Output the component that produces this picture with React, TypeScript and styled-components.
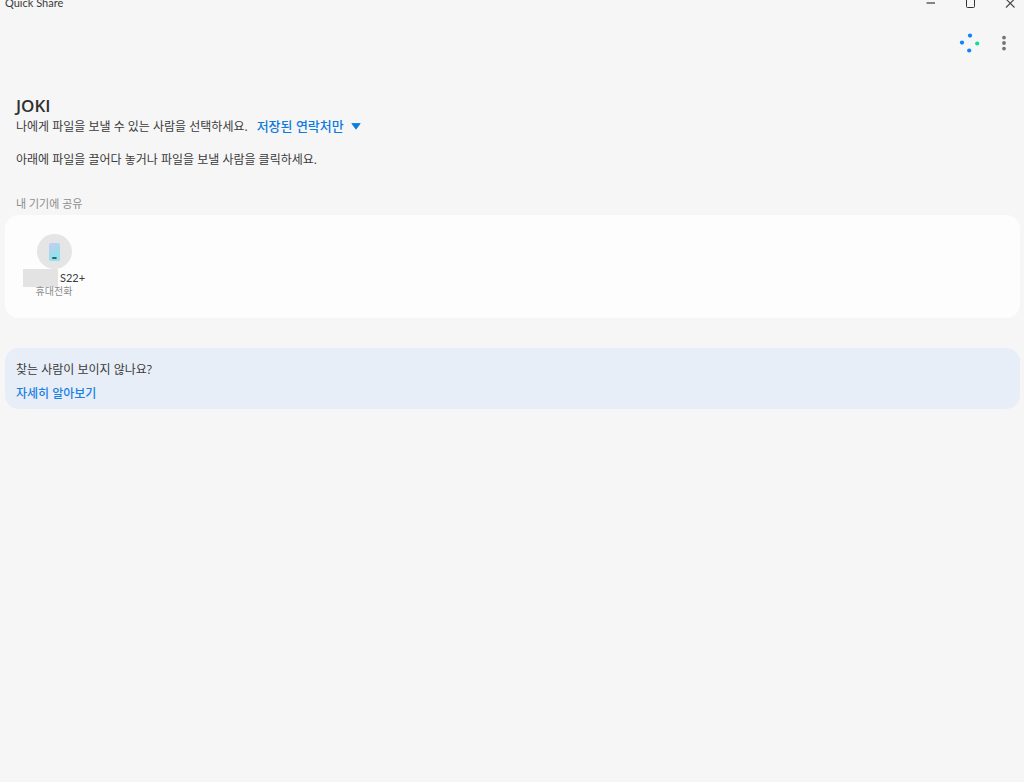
import React, { useState } from "react";
import styled, { createGlobalStyle } from "styled-components";

const GlobalStyle = createGlobalStyle`
  * { box-sizing: border-box; }
  body {
    margin: 0;
    background: #f6f6f6;
    color: #3a3a3a;
    font-family: "Open Sans", "Noto Sans CJK KR", sans-serif;
    font-size: 12px;
    line-height: 18px;
  }
  h1, h2, p, ul { margin: 0; padding: 0; }
  button, select { font: inherit; color: inherit; border: 0; background: none; padding: 0; }
`;

const Window = styled.div`
  min-height: 100vh;
`;

const TitleBar = styled.header`
  display: flex;
  justify-content: space-between;
  height: 6px;
  padding-left: 5px;
  font-family: Lato, "Noto Sans CJK KR", sans-serif;
  font-size: 11px;
  line-height: 6px;
`;

const WindowControls = styled.div`
  display: flex;
  gap: 12px;
`;

const IconButton = styled.button<{ $width: number }>`
  display: flex;
  align-items: center;
  justify-content: center;
  width: ${(p) => p.$width}px;
  svg { flex: none; }
`;

const Toolbar = styled.nav`
  display: flex;
  justify-content: flex-end;
  gap: 6px;
  height: 32px;
  margin-top: 21px;
  padding-right: 8px;
`;

const Intro = styled.section`
  padding: 36px 16px 0;
`;

const DeviceName = styled.h1`
  font-size: 17px;
  font-weight: 600;
  line-height: 22px;
  color: #303030;
`;

const Visibility = styled.div`
  display: flex;
  align-items: baseline;
  gap: 9px;
  height: 18px;
`;

const Picker = styled.span`
  display: flex;
  align-items: center;
  gap: 7px;
  color: #0f7bdc;
`;

const Select = styled.select`
  appearance: none;
  field-sizing: content;
  font-size: 13px;
  font-weight: 500;
  line-height: 18px;
  outline: none;
`;

const Hint = styled.p`
  margin-top: 16px;
`;

const SectionTitle = styled.h2`
  padding: 26px 16px 2px;
  font-size: 11px;
  font-weight: 400;
  color: #8c8c8c;
`;

const Card = styled.section<{ $tone: "plain" | "info" }>`
  margin: 0 4px 0 5px;
  border-radius: 14px;
  background: ${(p) => (p.$tone === "info" ? "#e7eef7" : "#fdfdfd")};
  padding: ${(p) => (p.$tone === "info" ? "13px 11px 6px" : "19px 16px 17px")};
  margin-top: ${(p) => (p.$tone === "info" ? 30 : 0)}px;
`;

const DeviceList = styled.ul`
  display: flex;
  min-height: 67px;
  list-style: none;
`;

const Device = styled.button`
  display: flex;
  flex-direction: column;
  align-items: center;
  width: 66px;
`;

const Avatar = styled.span`
  display: flex;
  align-items: center;
  justify-content: center;
  width: 35px;
  height: 35px;
  border-radius: 50%;
  background: #e5e5e5;
`;

const Model = styled.span`
  display: flex;
  align-items: center;
  gap: 2px;
  height: 18px;
  font-family: Lato, "Noto Sans CJK KR", sans-serif;
  font-size: 11px;
  white-space: nowrap;
`;

const HiddenName = styled.span`
  width: 35px;
  height: 18px;
  background: #e3e3e3;
`;

const Kind = styled.span`
  font-size: 10px;
  line-height: 8px;
  color: #8c8c8c;
`;

const HelpLink = styled.a`
  display: inline-block;
  margin-top: 6px;
  color: #1a80e4;
  font-weight: 500;
  text-decoration: none;
`;

export default function App() {
  const [audience, setAudience] = useState("contacts");
  return (
    <Window>
      <GlobalStyle />
      <TitleBar>
        <span>Quick Share</span>
        <WindowControls>
          <IconButton $width={28} aria-label="최소화">
            <svg width="10" height="10" viewBox="0 0 10 10">
              <path d="M1.5 5h8.5" stroke="#555" strokeWidth="1.4" />
            </svg>
          </IconButton>
          <IconButton $width={28} aria-label="최대화">
            <svg width="10" height="10" viewBox="0 0 10 10">
              <rect x="1.5" y="0.5" width="8" height="9" rx="1" fill="none" stroke="#333" />
            </svg>
          </IconButton>
          <IconButton $width={28} aria-label="닫기">
            <svg width="10" height="10" viewBox="0 0 10 10">
              <path d="M1 1l8.5 8.5M9.5 1l-8.5 8.5" stroke="#444" strokeWidth="1.1" />
            </svg>
          </IconButton>
        </WindowControls>
      </TitleBar>

      <Toolbar>
        <IconButton $width={32} aria-label="기기 검색">
          <svg width="22" height="22" viewBox="0 0 22 22">
            <circle cx="11" cy="3.6" r="2.1" fill="#0a84ff" />
            <circle cx="3" cy="10.6" r="2.1" fill="#0a84ff" />
            <circle cx="18.2" cy="11.5" r="2.1" fill="#12d89a" />
            <circle cx="10.2" cy="18.5" r="2.1" fill="#0a84ff" />
          </svg>
        </IconButton>
        <IconButton $width={24} aria-label="더보기">
          <svg width="6" height="18" viewBox="0 0 6 18">
            <circle cx="3" cy="3.6" r="1.9" fill="#747474" />
            <circle cx="3" cy="9" r="1.9" fill="#747474" />
            <circle cx="3" cy="14.6" r="1.9" fill="#747474" />
          </svg>
        </IconButton>
      </Toolbar>

      <main>
        <Intro>
          <DeviceName>JOKI</DeviceName>
          <Visibility>
            <label htmlFor="audience">나에게 파일을 보낼 수 있는 사람을 선택하세요.</label>
            <Picker>
              <Select id="audience" value={audience} onChange={(e) => setAudience(e.target.value)}>
                <option value="contacts">저장된 연락처만</option>
              </Select>
              <svg width="10" height="7" viewBox="0 0 10 7" aria-hidden="true">
                <path d="M.8.5h8.4L5 6.2z" fill="#0f7bdc" stroke="#0f7bdc" strokeWidth=".8" strokeLinejoin="round" />
              </svg>
            </Picker>
          </Visibility>
          <Hint>아래에 파일을 끌어다 놓거나 파일을 보낼 사람을 클릭하세요.</Hint>
        </Intro>

        <SectionTitle>내 기기에 공유</SectionTitle>
        <Card $tone="plain">
          <DeviceList>
            <li>
              <Device>
                <Avatar>
                  <svg width="11" height="18" viewBox="0 0 11 18" aria-hidden="true">
                    <defs>
                      <linearGradient id="phone" x1="0" y1="0" x2="0.4" y2="1">
                        <stop offset="0" stopColor="#c6cdf0" />
                        <stop offset="1" stopColor="#8ee3ec" />
                      </linearGradient>
                    </defs>
                    <rect width="11" height="18" rx="1.6" fill="url(#phone)" />
                    <rect x="3.2" y="14" width="4.4" height="2" rx=".6" fill="#35626c" />
                  </svg>
                </Avatar>
                <Model>
                  <HiddenName />
                  S22+
                </Model>
                <Kind>휴대전화</Kind>
              </Device>
            </li>
          </DeviceList>
        </Card>

        <Card $tone="info">
          <p>찾는 사람이 보이지 않나요?</p>
          <HelpLink href="#help">자세히 알아보기</HelpLink>
        </Card>
      </main>
    </Window>
  );
}
